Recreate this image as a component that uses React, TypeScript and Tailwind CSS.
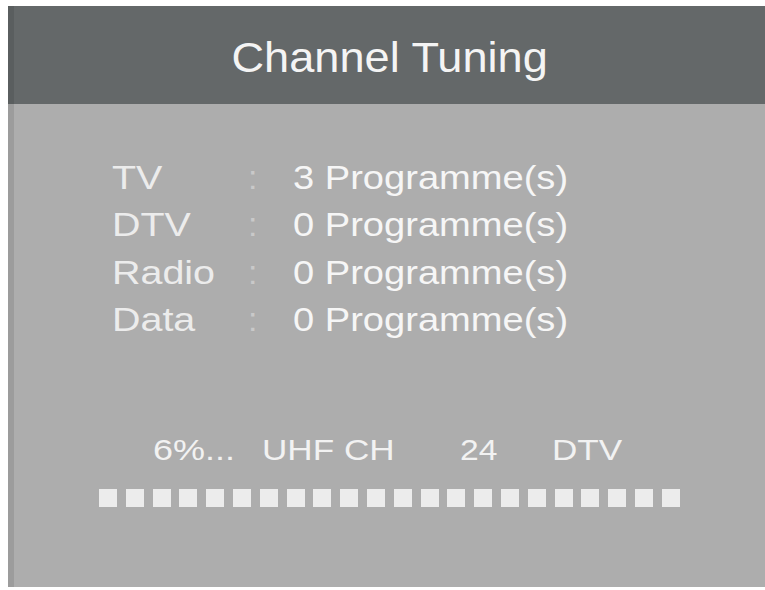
const ROWS = [
  { label: "TV", value: "3 Programme(s)" },
  { label: "DTV", value: "0 Programme(s)" },
  { label: "Radio", value: "0 Programme(s)" },
  { label: "Data", value: "0 Programme(s)" },
];

const SEGMENTS = 22;

function Stretch({ children, className }: { children: React.ReactNode; className?: string }) {
  return (
    <span className={"inline-block origin-left whitespace-nowrap " + (className ?? "")}>
      {children}
    </span>
  );
}

export default function App() {
  return (
    <div
      className="h-[590px] w-[765px] overflow-hidden bg-white pt-[6px] pl-[8px]"
      style={{ fontFamily: '"Liberation Sans", Arial, sans-serif' }}
    >
      <div className="flex h-[581px] w-[757px] flex-col border-l-[6px] border-[#9c9c9c] bg-[#adadad]">
        <div className="-ml-[6px] flex h-[98px] shrink-0 items-center justify-center border-l-[6px] border-[#5a5e5f] bg-[#646869] pt-[5px]">
          <span className="inline-block scale-x-[1.05] text-[43px] leading-none text-[#f4f4f4]">
            Channel Tuning
          </span>
        </div>

        <div className="flex flex-col pt-[49px] pl-[98px]">
          {ROWS.map((r) => (
            <div key={r.label} className="flex h-[47.5px] items-center text-[34px] leading-none">
              <div className="w-[136px]">
                <Stretch className="scale-x-[1.16] text-[#ececec]">{r.label}</Stretch>
              </div>
              <div className="w-[45px]">
                <Stretch className="text-[#c9c9c9]">:</Stretch>
              </div>
              <Stretch className="scale-x-[1.12] text-[#f6f6f6]">{r.value}</Stretch>
            </div>
          ))}
        </div>

        <div className="mt-[90px] flex h-[33px] items-center pl-[139px] text-[30px] leading-none text-[#f2f2f2]">
          <div className="w-[109px]">
            <Stretch className="scale-x-[1.2]">6%...</Stretch>
          </div>
          <div className="w-[198px]">
            <Stretch className="scale-x-[1.17]">UHF CH</Stretch>
          </div>
          <div className="w-[92px]">
            <Stretch className="scale-x-[1.12]">24</Stretch>
          </div>
          <Stretch className="scale-x-[1.17]">DTV</Stretch>
        </div>

        <div className="mt-[23px] flex gap-[8.8px] pl-[85px]">
          {Array.from({ length: SEGMENTS }).map((_, i) => (
            <div key={i} className="h-[18px] w-[18px] bg-[#ececec]" />
          ))}
        </div>
      </div>
    </div>
  );
}
